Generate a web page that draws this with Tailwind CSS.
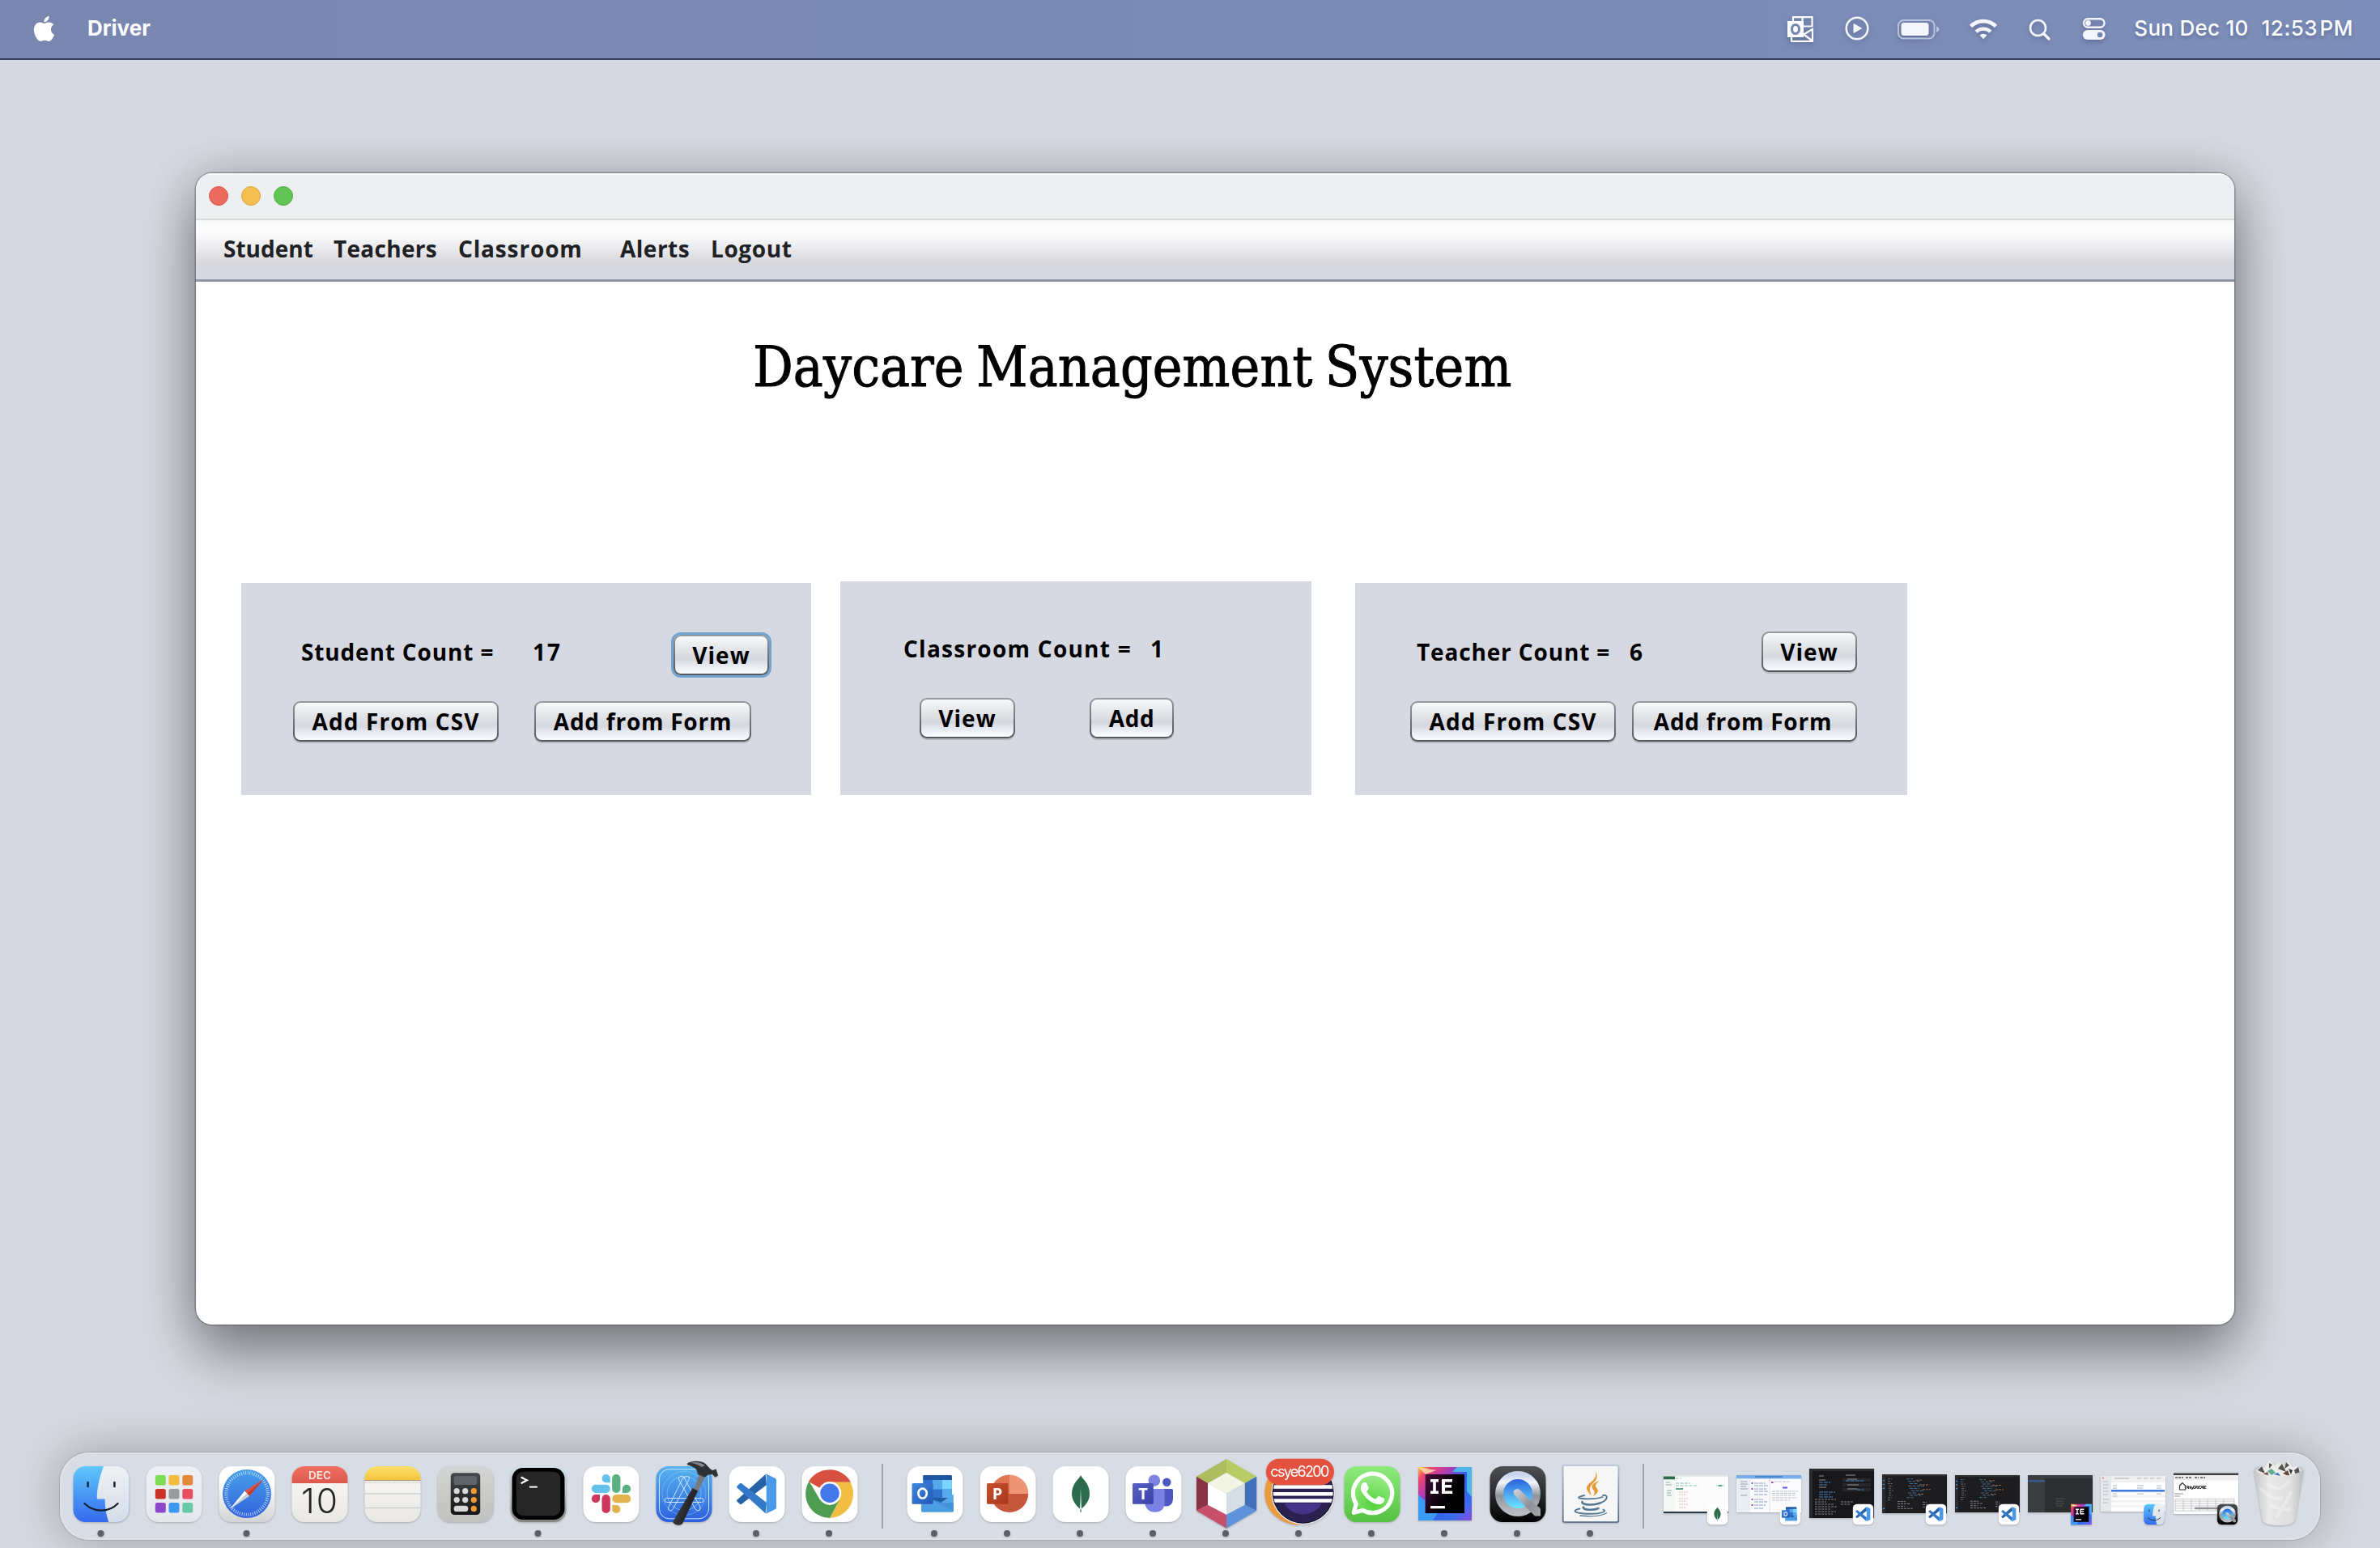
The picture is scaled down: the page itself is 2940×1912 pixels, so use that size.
<!DOCTYPE html>
<html lang="en">
<head>
<meta charset="utf-8">
<title>Driver</title>
<script src="https://cdn.jsdelivr.net/npm/@tailwindcss/browser@4"></script>
</head>
<body class="w-[2940px] h-[1912px] overflow-hidden bg-[#d6d9e1] flex flex-col font-['Inter',sans-serif]">

<!-- Shared dock artwork -->
<svg class="absolute w-0 h-0" aria-hidden="true">
  <defs>
    <linearGradient id="gFinder" x1="0" y1="0" x2="0" y2="1"><stop offset="0" stop-color="#5ec8fa"/><stop offset="1" stop-color="#3468ee"/></linearGradient>
    <linearGradient id="gFace" x1="0" y1="0" x2="0" y2="1"><stop offset="0" stop-color="#f0f1f4"/><stop offset="1" stop-color="#d3dce8"/></linearGradient>
    <linearGradient id="gPad" x1="0" y1="0" x2="0" y2="1"><stop offset="0" stop-color="#edf1f5"/><stop offset="1" stop-color="#e6e7ec"/></linearGradient>
    <linearGradient id="gWhite" x1="0" y1="0" x2="0" y2="1"><stop offset=".3" stop-color="#ffffff"/><stop offset="1" stop-color="#d4d4d5"/></linearGradient>
    <linearGradient id="gSafari" x1="0" y1="0" x2="0" y2="1"><stop offset="0" stop-color="#469fea"/><stop offset="1" stop-color="#3363dc"/></linearGradient>
    <linearGradient id="gXcode" x1="0" y1="0" x2="0" y2="1"><stop offset="0" stop-color="#56b4ee"/><stop offset="1" stop-color="#2c5fdf"/></linearGradient>
    <linearGradient id="gWhats" x1="0" y1="0" x2="0" y2="1"><stop offset="0" stop-color="#8deb7c"/><stop offset="1" stop-color="#55c141"/></linearGradient>
    <radialGradient id="gWhatsIn" cx=".5" cy=".8" r=".8"><stop offset="0" stop-color="#55d23c"/><stop offset="1" stop-color="#9bee8b"/></radialGradient>
    <linearGradient id="gNotes" x1="0" y1="0" x2="0" y2="1"><stop offset="0" stop-color="#fbdf6b"/><stop offset="1" stop-color="#f3c53b"/></linearGradient>
    <linearGradient id="gPaper" x1="0" y1="0" x2="0" y2="1"><stop offset="0" stop-color="#fcfbfa"/><stop offset="1" stop-color="#e8e7e2"/></linearGradient>
    <linearGradient id="gCal" x1="0" y1="0" x2="0" y2="1"><stop offset="0" stop-color="#ee6f62"/><stop offset="1" stop-color="#dc5a4d"/></linearGradient>
    <linearGradient id="gCalc" x1="0" y1="0" x2="0" y2="1"><stop offset="0" stop-color="#d3d5d3"/><stop offset="1" stop-color="#c1c1bf"/></linearGradient>
    <linearGradient id="gCalcIn" x1="0" y1="0" x2="0" y2="1"><stop offset="0" stop-color="#45494d"/><stop offset="1" stop-color="#161617"/></linearGradient>
    <linearGradient id="gTerm" x1="0" y1="0" x2="0" y2="1"><stop offset="0" stop-color="#cfe6ee"/><stop offset=".5" stop-color="#b9bec4"/><stop offset="1" stop-color="#86827e"/></linearGradient>
    <linearGradient id="gDark" x1="0" y1="0" x2="0" y2="1"><stop offset="0" stop-color="#505154"/><stop offset="1" stop-color="#020202"/></linearGradient>
    <linearGradient id="gIdea" x1="0" y1="0" x2="1" y2="1"><stop offset="0" stop-color="#fbd23c"/><stop offset=".12" stop-color="#f0456b"/><stop offset=".3" stop-color="#b63bb0"/><stop offset=".5" stop-color="#2e5ff0"/><stop offset=".8" stop-color="#3a6bf0"/><stop offset="1" stop-color="#8a4ee0"/></linearGradient>
    <linearGradient id="gIdeaIn" x1="0" y1="0" x2="1" y2=".6"><stop offset="0" stop-color="#470d3c"/><stop offset=".7" stop-color="#000"/></linearGradient>
    <linearGradient id="gQRing" x1="0" y1="0" x2="0" y2="1"><stop offset="0" stop-color="#c9d6ee"/><stop offset=".2" stop-color="#f1f5fc"/><stop offset=".55" stop-color="#8f959d"/><stop offset="1" stop-color="#b9bdc2"/></linearGradient>
    <linearGradient id="gQIn" x1="0" y1="0" x2="0" y2="1"><stop offset=".1" stop-color="#2a61dc"/><stop offset=".9" stop-color="#6fe9ff"/></linearGradient>
    <linearGradient id="gQTail" x1="0" y1="0" x2="1" y2="1"><stop offset="0" stop-color="#d5d8dc"/><stop offset=".6" stop-color="#8c9096"/><stop offset="1" stop-color="#a5a8ad"/></linearGradient>
    <linearGradient id="gOut" x1="0" y1="0" x2="1" y2="1"><stop offset="0" stop-color="#3f87dc"/><stop offset="1" stop-color="#2257b8"/></linearGradient>
    <linearGradient id="gPpt" x1="0" y1="0" x2="1" y2="1"><stop offset="0" stop-color="#c8502d"/><stop offset="1" stop-color="#a8381b"/></linearGradient>
    <linearGradient id="gTeams" x1="0" y1="0" x2="1" y2="1"><stop offset="0" stop-color="#5a62c6"/><stop offset="1" stop-color="#3a40a5"/></linearGradient>
    <linearGradient id="gJava" x1="0" y1="0" x2="0" y2="1"><stop offset="0" stop-color="#b4c2d9"/><stop offset="1" stop-color="#4c6380"/></linearGradient>
    <linearGradient id="gBin" x1="0" y1="0" x2="1" y2="0"><stop offset="0" stop-color="#c6c6c7"/><stop offset=".3" stop-color="#e8e8e8"/><stop offset=".75" stop-color="#dfdfdf"/><stop offset="1" stop-color="#bcbcbd"/></linearGradient>
    <linearGradient id="gHandle" x1="0" y1="0" x2="1" y2=".5"><stop offset="0" stop-color="#4c4c52"/><stop offset="1" stop-color="#17171a"/></linearGradient>
    <clipPath id="cTile"><rect x="10.500" y="17" width="69" height="69" rx="15.500"/></clipPath>
    <clipPath id="cEcl"><circle cx="49.700" cy="49.700" r="37"/></clipPath>

    <symbol id="finder" viewBox="10 17 70 70"><g clip-path="url(#cTile)"><rect x="10" y="17" width="70" height="70" fill="url(#gFinder)"/><path d="M48 17C43 30 40 43 39.600 56Q39.600 57.400 41 57.400H49.600C49.600 67 51 77 54.500 87H80V17Z" fill="url(#gFace)"/></g><path d="M28.600 37v5M61.400 37v5" stroke="#1c2a3c" stroke-width="2.600" stroke-linecap="round"/><path d="M24.400 63C36 74.500 54.500 74.500 65.600 63" fill="none" stroke="#15202e" stroke-width="2.200" stroke-linecap="round"/></symbol>

    <symbol id="vscode" viewBox="10 17 70 70"><rect x="10.500" y="17" width="69" height="69" rx="15.500" fill="#fff"/><path d="M55.600 26.900 20.500 58.500Q19.600 59.600 20.500 60.600L24 63.800Q25 64.500 26 63.800L57 40Z" fill="#2762a8"/><path d="M55.600 75.200 20.500 43.500Q19.600 42.400 20.500 41.400L24 38.200Q25 37.500 26 38.200L57 62Z" fill="#3379c9"/><path d="M55.600 26.700Q56.500 26.400 57.500 26.900L67.500 31.800Q69 32.600 69 34V68Q69 69.400 67.500 70.200L57.500 75Q56.500 75.500 55.600 75.200 56.700 74.500 56.700 73V29Q56.700 27.500 55.600 26.700Z" fill="#4b9ae9"/></symbol>

    <symbol id="outlook" viewBox="10 17 70 70"><rect x="10.500" y="17" width="69" height="69" rx="15.500" fill="#fff"/><rect x="30.300" y="28" width="35.500" height="34" rx="1.500" fill="#2f72cc"/><path d="M31.800 28H64.300Q65.800 28 65.800 29.500V34H30.300V29.500Q30.300 28 31.800 28Z" fill="#21559f"/><rect x="42" y="34" width="12" height="11.500" fill="#55aaea"/><rect x="54" y="34" width="11.800" height="11.500" fill="#7ad4fb"/><rect x="54" y="45.500" width="11.800" height="11" fill="#55aaea"/><path d="M36 56H62L50 64Z" fill="#235ca8"/><path d="M43 58.500 67.800 73V51.500L52 62Z" fill="#54a9e6"/><path d="M28 56 40 57 67.800 72.500Q67.500 73.700 66 73.700H30Q28 73.700 28 72Z" fill="#4e9fe2"/><path d="M46 62 67.800 72.500V62L52 62Z" fill="#4790dc"/><rect x="16.500" y="38" width="26.200" height="25.700" rx="1.500" fill="url(#gOut)"/><ellipse cx="29.600" cy="50.600" rx="5.200" ry="5.900" fill="none" stroke="#fff" stroke-width="2.700"/></symbol>

    <symbol id="mongo" viewBox="10 17 70 70"><rect x="10.500" y="17" width="69" height="69" rx="15.500" fill="#fff"/><path d="M45 28C47 33 56 38 56 51 56 60 50 66 46 69.500L45.400 74H44.600L44 69.500C40 66 34 60 34 51 34 38 43 33 45 28Z" fill="#2b6a4b"/><path d="M45 44 46 69.500 45 72 44 69.500Z" fill="#dfe9e3"/></symbol>

    <symbol id="idea" viewBox="10 16 70 70"><rect x="12" y="18" width="66" height="66" fill="url(#gIdea)"/><path d="M60 18H78V55L72 48V24H54Z" fill="#4fb6ea"/><path d="M12 52 20.700 60V75H36L30 84H12Z" fill="#3a9af4"/><path d="M12 18 20.700 27 34 22Z" fill="#fde8b0" opacity=".8"/><rect x="20.700" y="27" width="48.300" height="48" fill="url(#gIdeaIn)"/><path d="M27 33h10v3.500h-3.200v11H37V51H27v-3.500h3.200v-11H27ZM41 33h13v3.600h-9V40h8v3.500h-8v3.900h9.200V51H41ZM27 66h18v3.200H27Z" fill="#fff"/></symbol>

    <symbol id="quicktime" viewBox="10 17 70 70"><rect x="10.500" y="17" width="69" height="69" rx="15.500" fill="url(#gDark)"/><circle cx="45" cy="51" r="23" fill="url(#gQIn)" stroke="url(#gQRing)" stroke-width="10"/><path d="M40.500 52Q38 47.500 42 45.500 45.500 44 48.500 47L66 64.500 69.500 66.500Q73 68 73 71V78.500H66L59.500 72Z" fill="url(#gQTail)"/></symbol>

    <symbol id="code" viewBox="0 0 80 50" preserveAspectRatio="none"><rect width="80" height="50" fill="#1d1d1f"/><rect width="80" height="2.500" fill="#2f2f32"/><rect width="4" height="50" fill="#2a2b2e"/><g fill="none" stroke-width=".9"><path d="M7 6h5M7 9h4M7 12h6M8 15h5M8 18h4M8 21h6M8 24h4M8 27h5M7 30h5M7 33h4" stroke="#68707a" stroke-dasharray="3 .8"/><path d="M30 6h8M32 9h14M34 12h10M32 15h20M34 18h12M36 21h16M32 24h10M34 27h14M30 30h9" stroke="#4b7ba0" stroke-dasharray="4 1.500"/><path d="M42 7.500h8M46 13.500h12M50 19.500h10M44 25.500h8" stroke="#a4714f" stroke-dasharray="3 1"/><path d="M19 35h10M19 38h16M19 41h9M19 44h20M50 36h5M50 39h6M50 42h5" stroke="#8b8f94" stroke-dasharray="3 1"/><path d="M1 8h2M1 13h2M1 18h2M1 44h2" stroke="#3f8fe0" stroke-width="1.400"/></g></symbol>
  </defs>
</svg>

<!-- Menu bar -->
<header class="h-[74px] shrink-0 bg-linear-to-r from-[#7987b0] to-[#7d8eba] border-b-2 border-[#38405c] flex items-center text-white">
  <svg class="ml-[39px] mt-[-2px] w-[31px] h-[31px]" viewBox="0 0 24 24" fill="#fff"><path d="M12.152 6.896c-.948 0-2.415-1.078-3.960-1.040-2.040.027-3.910 1.183-4.961 3.014-2.117 3.675-.546 9.103 1.519 12.090 1.013 1.454 2.208 3.090 3.792 3.039 1.520-.065 2.090-.987 3.935-.987 1.831 0 2.350.987 3.960.948 1.637-.026 2.676-1.480 3.676-2.948 1.156-1.688 1.636-3.325 1.662-3.415-.039-.013-3.182-1.221-3.220-4.857-.026-3.040 2.480-4.494 2.597-4.559-1.429-2.090-3.623-2.324-4.390-2.376-2-.156-3.675 1.090-4.610 1.090zM15.530 3.830c.843-1.012 1.400-2.427 1.245-3.830-1.207.052-2.662.805-3.532 1.818-.780.896-1.454 2.338-1.273 3.714 1.338.104 2.715-.688 3.559-1.701"/></svg>
  <span class="ml-[38px] mt-[-4px] text-[26px] font-bold whitespace-nowrap">Driver</span>
  <svg class="ml-auto w-[400px] h-[72px] [filter:drop-shadow(0_3px_3px_rgba(30,40,80,.3))]" viewBox="2206 0 400 72" fill="none" stroke="#f4f6fb">
    <g stroke="#fff" stroke-width="2.200"><path d="M2215 26V21.200H2238.500V33M2226.500 21V32.500M2228 32.500H2238.500M2213 46V51H2239V36L2228 42.500 2239 50.500"/><path d="M2208 26H2228V46H2208Z" fill="#fff" stroke="none"/><ellipse cx="2218" cy="36" rx="4.500" ry="5.500" stroke="#7486b2" stroke-width="3.200"/></g>
    <circle cx="2294" cy="35" r="13.300" stroke-width="2.600"/><path d="M2290 29.500V40.500L2299.500 35Z" fill="#f4f6fb" stroke-width="1" stroke-linejoin="round"/>
    <rect x="2345" y="25" width="44.500" height="22.500" rx="6.500" stroke-width="2" stroke="#b9c3dc"/><rect x="2348.500" y="28" width="34" height="16" rx="3.500" fill="#f4f6fb" stroke="none"/><path d="M2392 32.500Q2395.500 34 2395.500 36.200 2395.500 38.500 2392 40Z" fill="#b9c3dc" stroke="none"/>
    <path d="M2434.500 32.500A22 22 0 0 1 2465.500 32.500" stroke-width="4.600"/><path d="M2441 39.200A13 13 0 0 1 2459 39.200" stroke-width="4.400"/><path d="M2445.500 43.500A7 7 0 0 1 2454.500 43.500L2450 48.300Z" fill="#f4f6fb" stroke="none"/>
    <circle cx="2517.500" cy="34.500" r="9.500" stroke-width="2.600"/><path d="M2524.500 41.500 2531 48" stroke-width="3.200" stroke-linecap="round"/>
    <rect x="2574" y="23.200" width="25.500" height="10.600" rx="5.300" stroke-width="2.400"/><circle cx="2579.500" cy="28.500" r="3.400" fill="#f4f6fb" stroke="none"/><rect x="2572.800" y="37" width="27.800" height="12" rx="6" fill="#f4f6fb" stroke="none"/><circle cx="2594" cy="43" r="3.300" fill="#7486b2" stroke="none"/>
  </svg>
  <span class="ml-[30px] mt-[-4px] text-[26px] font-medium whitespace-nowrap tracking-[.27px] [text-shadow:0_3px_4px_rgba(30,40,80,.3)]">Sun Dec 10</span>
  <span class="ml-[16px] mr-[33px] mt-[-4px] text-[26px] font-medium whitespace-nowrap tracking-[.5px] [word-spacing:-5px] [text-shadow:0_3px_4px_rgba(30,40,80,.3)]">12:53 PM</span>
</header>

<!-- Application window -->
<main class="ml-[242px] mt-[140px] w-[2518px] h-[1422px] shrink-0 rounded-[20px] overflow-hidden bg-white flex flex-col shadow-[0_0_0_1.5px_rgba(80,82,90,.45),0_36px_70px_rgba(0,0,0,.4),0_0_60px_rgba(0,0,0,.18)] font-['Open_Sans',sans-serif] font-bold text-[28px] text-black">
  <div class="h-[58px] shrink-0 bg-[#eeeff1] border-t-2 border-t-[#fafafa] border-b-2 border-b-[#d8d9d9] flex items-center gap-4 pl-4 pb-[2px]">
    <span class="size-6 rounded-full bg-[#ec6a5e] border border-[#d65548]"></span>
    <span class="size-6 rounded-full bg-[#f4bf50] border border-[#dca63c]"></span>
    <span class="size-6 rounded-full bg-[#61c555] border border-[#50ab43]"></span>
  </div>
  <nav class="h-[76px] shrink-0 flex items-start leading-[71px] whitespace-nowrap text-[#202124] border-b-[3px] border-[#9095a5] bg-[linear-gradient(180deg,#f8faf9_0,#fdfdfd_18%,#f8f8fa_28%,#d9d9dd_72%,#d6d9e1_76%)]">
    <span class="ml-[34px] w-[136px]">Student</span>
    <span class="w-[154px] tracking-[.3px]">Teachers</span>
    <span class="w-[200px] tracking-[.85px]">Classroom</span>
    <span class="w-[112px] tracking-[.5px]">Alerts</span>
    <span class="tracking-[.6px]">Logout</span>
  </nav>
  <h1 class="ml-[688px] mt-[50px] h-[110px] shrink-0 leading-[110px] font-['DejaVu_Serif_Condensed','DejaVu_Serif',serif] [font-stretch:condensed] font-normal text-[69px] tracking-[.1px] [word-spacing:-4.5px] [-webkit-text-stroke:1px_#000] whitespace-nowrap">Daycare Management System</h1>

  <div class="flex items-end ml-14 mt-[210px] whitespace-nowrap leading-[50px]">
    <!-- Students -->
    <section class="w-[704px] h-[262px] bg-[#d6d9e1] pt-[60px]">
      <div class="flex h-[50px]">
        <span class="ml-[74px] w-[286px] tracking-[.85px]">Student Count =</span>
        <span class="w-[174px] tracking-[2px]">17</span>
        <button class="mt-1 w-[118px] h-[50px] p-[2px] rounded-[9px] bg-linear-to-b from-[#959a9f] to-[#53565b] shadow-[0_0_0_3px_#73a4d1]"><span class="flex justify-center h-full rounded-[7px] leading-[46px] tracking-[1.100px] bg-[linear-gradient(180deg,#f8f9fa_0,#e2e4e7_35%,#d5d8df_62%,#e4e7f0_76%,#fbfcff_100%)]">View</span></button>
      </div>
      <div class="flex gap-11 mt-9 ml-16">
        <button class="w-[254px] h-[50px] p-[2px] rounded-[9px] bg-linear-to-b from-[#959a9f] to-[#53565b] shadow-[0_2px_0_#b6b9c0]"><span class="flex justify-center h-full rounded-[7px] leading-[46px] tracking-[1.120px] bg-[linear-gradient(180deg,#f8f9fa_0,#e2e4e7_35%,#d5d8df_62%,#e4e7f0_76%,#fbfcff_100%)]">Add From CSV</span></button>
        <button class="w-[268px] h-[50px] p-[2px] rounded-[9px] bg-linear-to-b from-[#959a9f] to-[#53565b] shadow-[0_2px_0_#b6b9c0]"><span class="flex justify-center h-full rounded-[7px] leading-[46px] tracking-[.75px] bg-[linear-gradient(180deg,#f8f9fa_0,#e2e4e7_35%,#d5d8df_62%,#e4e7f0_76%,#fbfcff_100%)]">Add from Form</span></button>
      </div>
    </section>
    <!-- Classrooms -->
    <section class="ml-9 w-[582px] h-[264px] bg-[#d6d9e1] pt-[58px]">
      <div class="flex h-[50px]">
        <span class="ml-[78px] w-[305px] tracking-[1.250px]">Classroom Count =</span>
        <span>1</span>
      </div>
      <div class="flex gap-[92px] mt-9 ml-[98px]">
        <button class="w-[118px] h-[50px] p-[2px] rounded-[9px] bg-linear-to-b from-[#959a9f] to-[#53565b] shadow-[0_2px_0_#b6b9c0]"><span class="flex justify-center h-full rounded-[7px] leading-[46px] tracking-[1.100px] bg-[linear-gradient(180deg,#f8f9fa_0,#e2e4e7_35%,#d5d8df_62%,#e4e7f0_76%,#fbfcff_100%)]">View</span></button>
        <button class="w-[104px] h-[50px] p-[2px] rounded-[9px] bg-linear-to-b from-[#959a9f] to-[#53565b] shadow-[0_2px_0_#b6b9c0]"><span class="flex justify-center h-full rounded-[7px] leading-[46px] tracking-[.6px] bg-[linear-gradient(180deg,#f8f9fa_0,#e2e4e7_35%,#d5d8df_62%,#e4e7f0_76%,#fbfcff_100%)]">Add</span></button>
      </div>
    </section>
    <!-- Teachers -->
    <section class="ml-[54px] w-[682px] h-[262px] bg-[#d6d9e1] pt-[60px]">
      <div class="flex h-[50px]">
        <span class="ml-[76px] w-[263px] tracking-[.85px]">Teacher Count =</span>
        <span class="w-[163px]">6</span>
        <button class="w-[118px] h-[50px] p-[2px] rounded-[9px] bg-linear-to-b from-[#959a9f] to-[#53565b] shadow-[0_2px_0_#b6b9c0]"><span class="flex justify-center h-full rounded-[7px] leading-[46px] tracking-[1.100px] bg-[linear-gradient(180deg,#f8f9fa_0,#e2e4e7_35%,#d5d8df_62%,#e4e7f0_76%,#fbfcff_100%)]">View</span></button>
      </div>
      <div class="flex gap-5 mt-9 ml-[68px]">
        <button class="w-[254px] h-[50px] p-[2px] rounded-[9px] bg-linear-to-b from-[#959a9f] to-[#53565b] shadow-[0_2px_0_#b6b9c0]"><span class="flex justify-center h-full rounded-[7px] leading-[46px] tracking-[1.120px] bg-[linear-gradient(180deg,#f8f9fa_0,#e2e4e7_35%,#d5d8df_62%,#e4e7f0_76%,#fbfcff_100%)]">Add From CSV</span></button>
        <button class="w-[278px] h-[50px] p-[2px] rounded-[9px] bg-linear-to-b from-[#959a9f] to-[#53565b] shadow-[0_2px_0_#b6b9c0]"><span class="flex justify-center h-full rounded-[7px] leading-[46px] tracking-[.75px] pr-1 bg-[linear-gradient(180deg,#f8f9fa_0,#e2e4e7_35%,#d5d8df_62%,#e4e7f0_76%,#fbfcff_100%)]">Add from Form</span></button>
      </div>
    </section>
  </div>
</main>

<!-- Dock -->
<footer class="ml-[74px] mt-[158px] w-[2792px] h-[108px] shrink-0 rounded-[36px] bg-[#d8dce5] shadow-[inset_0_0_0_2px_#e0e2e8,0_0_0_1px_#a6a8ad,0_0_60px_rgba(0,0,0,.28)] flex pl-[6px] [&>svg]:w-[90px] [&>svg]:h-[108px] [&>svg]:shrink-0 [&>svg]:overflow-visible [&>svg]:[filter:drop-shadow(0_1px_1px_rgba(0,0,0,.22))]">
  <svg viewBox="0 0 90 108"><use href="#finder" x="10" y="17" width="70" height="70"/><circle cx="44.500" cy="100" r="4" fill="#5b5f69"/></svg>
  <svg viewBox="0 0 90 108"><rect x="10.500" y="17" width="69" height="69" rx="15.500" fill="url(#gPad)"/><rect x="21.800" y="28" width="13" height="12.500" rx="2.500" fill="#7fdc55"/><rect x="38.500" y="28" width="13" height="12.500" rx="2.500" fill="#f2bd41"/><rect x="55.300" y="28" width="13" height="12.500" rx="2.500" fill="#e28a3a"/><rect x="21.800" y="45" width="13" height="12.500" rx="2.500" fill="#cb3326"/><rect x="38.500" y="45" width="13" height="12.500" rx="2.500" fill="#989b9d"/><rect x="55.300" y="45" width="13" height="12.500" rx="2.500" fill="#e8505f"/><rect x="21.800" y="62" width="13" height="12.500" rx="2.500" fill="#8e48cc"/><rect x="38.500" y="62" width="13" height="12.500" rx="2.500" fill="#3c98f0"/><rect x="55.300" y="62" width="13" height="12.500" rx="2.500" fill="#66c9a8"/></svg>
  <svg viewBox="0 0 90 108"><rect x="10.500" y="17" width="69" height="69" rx="15.500" fill="url(#gWhite)"/><circle cx="45" cy="51" r="30" fill="url(#gSafari)"/><circle cx="45" cy="51" r="25.800" fill="none" stroke="#d6e7fb" stroke-width="4" stroke-dasharray=".9 1.802" opacity=".85"/><path d="M24.300 69.500 42.300 47.500 48.200 53.500Z" fill="#fff"/><path d="M24.300 69.500 45.200 50.500 48.200 53.500Z" fill="#c9ced6"/><path d="M66 33 42.300 47.500 48.200 53.500Z" fill="#e25244"/><path d="M66 33 45.200 50.500 48.200 53.500Z" fill="#bd3e33"/><circle cx="44.500" cy="100" r="4" fill="#5b5f69"/></svg>
  <svg viewBox="0 0 90 108"><g clip-path="url(#cTile)"><rect x="10" y="17" width="70" height="70" fill="url(#gPaper)"/><rect x="10" y="17" width="70" height="21" fill="url(#gCal)"/></g><text x="45" y="32.600" font-family="Inter" font-size="13.500" font-weight="600" fill="#fbe9e6" text-anchor="middle" textLength="28">DEC</text><text x="44.500" y="75" font-family="Inter" font-size="42.500" font-weight="300" fill="#262626" text-anchor="middle" textLength="45">10</text></svg>
  <svg viewBox="0 0 90 108"><g clip-path="url(#cTile)"><rect x="10" y="17" width="70" height="70" fill="url(#gPaper)"/><rect x="10" y="17" width="70" height="17" fill="url(#gNotes)"/><rect x="10" y="34" width="70" height="1.200" fill="#a9a08a"/><path d="M11 37.500H80" stroke="#bdbdb8" stroke-width="1.200" stroke-dasharray="1.200 1.200"/><path d="M10 51H80M10 68.500H80" stroke="#cfcfd3" stroke-width="1.300"/></g></svg>
  <svg viewBox="0 0 90 108"><rect x="10.500" y="17" width="69" height="69" rx="15.500" fill="url(#gCalc)"/><rect x="26.700" y="25.300" width="36.500" height="51.700" rx="4.500" fill="url(#gCalcIn)"/><rect x="30.700" y="29" width="28.500" height="11" rx="2.500" fill="#5f6468"/><g fill="#d8d8d6"><circle cx="34.200" cy="47.700" r="3.600"/><circle cx="44.700" cy="47.700" r="3.600"/><circle cx="34.200" cy="58.600" r="3.600"/><circle cx="44.700" cy="58.600" r="3.600"/><rect x="30.600" y="65.800" width="17.700" height="7.200" rx="3.600"/></g><g fill="#f09a38"><circle cx="55.300" cy="47.700" r="3.600"/><circle cx="55.300" cy="58.600" r="3.600"/><circle cx="55.300" cy="69.400" r="3.600"/></g></svg>
  <svg viewBox="0 0 90 108"><rect x="10.500" y="17" width="69" height="69" rx="15.500" fill="url(#gTerm)"/><rect x="12.500" y="19" width="65" height="64" rx="13.500" fill="#000"/><rect x="17.700" y="23.800" width="54.500" height="54.500" rx="8.500" fill="#262626"/><path d="M23.600 30.500 30.800 34.200 23.600 38.200" fill="none" stroke="#fff" stroke-width="2.300"/><path d="M34 42.600H43.800" stroke="#fff" stroke-width="2"/><circle cx="44.500" cy="100" r="4" fill="#5b5f69"/></svg>
  <svg viewBox="0 0 90 108"><rect x="10.500" y="17" width="69" height="69" rx="15.500" fill="#fdfdfd"/><g fill="#65c2ea"><rect x="20.800" y="39.700" width="23" height="10.200" rx="5.100"/><path d="M43.800 37.200H38.700A5.100 5.100 0 1 1 43.800 32.100Z"/></g><g fill="#5bb181"><rect x="46.100" y="27" width="10.300" height="23" rx="5.100"/><path d="M58.900 49.900V44.800A5.100 5.100 0 1 1 64 49.900Z"/></g><g fill="#e2b34c"><rect x="46.200" y="52.100" width="23" height="10.200" rx="5.100"/><path d="M46.200 64.900H51.300A5.100 5.100 0 1 1 46.200 70Z"/></g><g fill="#cd375d"><rect x="33.500" y="52.100" width="10.300" height="23" rx="5.100"/><path d="M31 52.100V57.200A5.100 5.100 0 1 1 25.900 52.100Z"/></g></svg>
  <svg viewBox="0 0 90 108"><rect x="10.500" y="17" width="69" height="69" rx="15.500" fill="url(#gXcode)"/><rect x="14.500" y="20.800" width="61" height="61" rx="12" fill="none" stroke="#cfe6fb" stroke-width="1"/><g fill="none" stroke="#a8d2f6" stroke-width=".8"><circle cx="45" cy="50.500" r="27" opacity=".5"/><circle cx="45" cy="50.500" r="21" opacity=".7"/><g stroke="#cfe6fb" stroke-width="1"><rect x="21" y="56.500" width="48" height="5" rx="2.500"/><path d="M43.500 31.500 26 67Q24.500 71 27.500 72Q30 72.500 31.500 69.500L51.500 32.500Q52 29 48.500 29.500 47 29.500 43.500 31.500ZM40 29.500Q37 31 39 34.500L59 70Q61.500 73 64 71.500 66 70 64.500 66.500L45 31Q43 28.500 40 29.500Z"/></g></g><path d="M57 46 64.500 25 72 28 61.500 50Z" fill="#77797f"/><path d="M55.500 44 62 47.500 43 88Q36.500 92.500 31 86Z" fill="url(#gHandle)"/><path d="M49 13.500C55 9.500 66 10 71.500 14L77 20 80 22 84.500 20.500 87 28.500 83.500 30.500 80 27 75 27.500 70.500 30.500 62 27Q61.500 18 49 15Z" fill="#303135"/><path d="M52 12.800Q63 10.500 71 16L67 18Q60 13.500 52 12.800Z" fill="#85868b"/></svg>
  <svg viewBox="0 0 90 108"><use href="#vscode" x="10" y="17" width="70" height="70"/><circle cx="44" cy="100" r="4" fill="#5b5f69"/></svg>
  <svg viewBox="0 0 90 108"><rect x="10.500" y="17" width="69" height="69" rx="15.500" fill="#fdfdfd"/><path d="M45 51 19 36A30 30 0 0 1 71 36.500L70.200 36.800H45Z" fill="#d8503f"/><path d="M45 36.800H70.500A30 30 0 0 1 45 81L57.300 58Z" fill="#f1bd42"/><path d="M19.500 35.500 32.700 58 45 65.200 57.300 58.100 45 81A30 30 0 0 1 19.500 35.500Z" fill="#4f9d52"/><circle cx="45" cy="50.300" r="14.300" fill="#fff"/><circle cx="45" cy="50.300" r="11.700" fill="#4379e8"/><circle cx="44" cy="100" r="4" fill="#5b5f69"/></svg>
  <div class="w-10 flex justify-center pt-[14px]"><span class="w-[2px] h-20 bg-[#a0a4ac]"></span></div>
  <svg viewBox="0 0 90 108"><use href="#outlook" x="10" y="17" width="70" height="70"/><circle cx="44" cy="100" r="4" fill="#5b5f69"/></svg>
  <svg viewBox="0 0 90 108"><rect x="10.500" y="17" width="69" height="69" rx="15.500" fill="#fff"/><path d="M47 50.700V27.400A23.300 23.300 0 0 0 23.700 50.700Z" fill="#e07552"/><path d="M47 50.700V27.400A23.300 23.300 0 0 1 70.300 50.700Z" fill="#ef9574"/><path d="M23.700 50.700H70.300A23.300 23.300 0 0 1 23.700 50.700Z" fill="#c7573a"/><rect x="19" y="38" width="26.500" height="25.700" rx="1.500" fill="url(#gPpt)"/><text x="32" y="57.500" font-family="Open Sans" font-size="20" font-weight="700" fill="#fff" text-anchor="middle">P</text><circle cx="44" cy="100" r="4" fill="#5b5f69"/></svg>
  <svg viewBox="0 0 90 108"><use href="#mongo" x="10" y="17" width="70" height="70"/><circle cx="44" cy="100" r="4" fill="#5b5f69"/></svg>
  <svg viewBox="0 0 90 108"><rect x="10.500" y="17" width="69" height="69" rx="15.500" fill="#fff"/><circle cx="61.300" cy="36.700" r="5.200" fill="#4f57c2"/><path d="M54 45H67.500Q69 45 69 46.500V57Q69 66.500 60 66.500 56 66.500 54 64Z" fill="#4f57c2"/><circle cx="45.800" cy="34.700" r="7.300" fill="#7e84e3"/><path d="M36 45H57.200Q58.700 45 58.700 46.500V61Q58.700 73.700 46.500 73.700 36 73.700 34 62Z" fill="#7b81e2"/><rect x="19" y="38" width="25.800" height="25.700" rx="1.500" fill="url(#gTeams)"/><text x="32" y="57.500" font-family="Open Sans" font-size="20" font-weight="700" fill="#fff" text-anchor="middle">T</text><circle cx="44" cy="100" r="4" fill="#5b5f69"/></svg>
  <svg viewBox="0 0 90 108"><path d="M45 8 8 29.700 22 38 45 25Z" fill="#adbc5c"/><path d="M45 8 82.200 29.700 67.700 38 45 25Z" fill="#b9cc64"/><path d="M8 29.700 22 38V64.700L8 72Z" fill="#8b3346"/><path d="M8 72 22 64.700 45 76.700V93.700Z" fill="#c9506a"/><path d="M82.200 29.700 67.700 38V64.700L82.200 72Z" fill="#4270ba"/><path d="M82.200 72 67.700 64.700 45 76.700V93.700Z" fill="#5e92db"/><path d="M45 25 67.700 38 45 50.700 22 38Z" fill="#f2f4e4"/><path d="M22 38 45 50.700V76.700L22 64.700Z" fill="#fff"/><path d="M67.700 38 45 50.700V76.700L67.700 64.700Z" fill="#d4dce5"/><circle cx="44" cy="100" r="4" fill="#5b5f69"/></svg>
  <svg viewBox="0 0 90 108"><path d="M44 89.500C18 88 2.200 70 2.200 50 2.200 30 16 14 38 12Z" fill="#eb9a3e"/><circle cx="49.700" cy="49.700" r="39.300" fill="#e9eaf0"/><circle cx="49.700" cy="49.700" r="38" fill="#0f0c1c"/><g clip-path="url(#cEcl)"><rect x="10" y="10" width="80" height="80" fill="#2b2150"/><circle cx="49.700" cy="50" r="26.500" fill="#45348a"/><rect x="10" y="38" width="80" height="25" fill="#2b2150"/><path d="M10 42.500H90M10 51.200H90M10 59.500H90" stroke="#fff" stroke-width="4.400"/></g><rect x="3.900" y="7.700" width="84" height="32.500" rx="16.200" fill="#e5513f"/><text x="45.800" y="29.800" font-family="Inter" font-size="18" fill="#fff" text-anchor="middle" textLength="73">csye6200</text><circle cx="44" cy="100" r="4" fill="#5b5f69"/></svg>
  <svg viewBox="0 0 90 108"><rect x="10.500" y="17" width="69" height="69" rx="15.500" fill="url(#gWhats)"/><circle cx="45.500" cy="50.300" r="24" fill="url(#gWhatsIn)"/><path d="M45.500 26.200A24.200 24.200 0 1 1 33.500 71.400L22.300 74.300 25.300 63.500A24.200 24.200 0 0 1 45.500 26.200Z" fill="none" stroke="#fff" stroke-width="5.200" stroke-linejoin="round"/><path transform="translate(16.300 21.300) scale(2.430)" fill="#fff" d="M17.472 14.382c-.297-.149-1.758-.867-2.030-.967-.273-.099-.471-.148-.670.150-.197.297-.767.966-.940 1.164-.173.199-.347.223-.644.075-.297-.150-1.255-.463-2.390-1.475-.883-.788-1.480-1.761-1.653-2.059-.173-.297-.018-.458.130-.606.134-.133.298-.347.446-.520.149-.174.198-.298.298-.497.099-.198.050-.371-.025-.520-.075-.149-.669-1.612-.916-2.207-.242-.579-.487-.500-.669-.510-.173-.008-.371-.010-.570-.010-.198 0-.520.074-.792.372-.272.297-1.040 1.016-1.040 2.479 0 1.462 1.065 2.875 1.213 3.074.149.198 2.096 3.200 5.077 4.487.709.306 1.262.489 1.694.625.712.227 1.360.195 1.871.118.571-.085 1.758-.719 2.006-1.413.248-.694.248-1.289.173-1.413-.074-.124-.272-.198-.570-.347"/><circle cx="44" cy="100" r="4" fill="#5b5f69"/></svg>
  <svg viewBox="0 0 90 108"><use href="#idea" x="10" y="16" width="70" height="70"/><circle cx="44" cy="100" r="4" fill="#5b5f69"/></svg>
  <svg viewBox="0 0 90 108"><use href="#quicktime" x="10" y="17" width="70" height="70"/><circle cx="44" cy="100" r="4" fill="#5b5f69"/></svg>
  <svg viewBox="0 0 90 108"><rect x="10.800" y="16" width="68.400" height="70" rx="1.500" fill="#f6f6f6" stroke="url(#gJava)" stroke-width="1.500"/><g fill="#e89a35"><path d="M50.500 23C53.500 30 49 33.500 43 38.500 38 43 39.500 47 46 53.500 43 44.500 43 43 48 38 53 33.500 54.500 29 50.500 23Z"/><path d="M56 35C47 37.500 44.500 42 48.500 46.500 50.500 49 50 51 47.500 54 55 50.500 55 46.500 52 43.500 50 40.500 51.500 38 56 35Z"/></g><g fill="none" stroke="#557793" stroke-width="1.900" stroke-linecap="round"><path d="M37 53C28 55 27 57 38 57.300 48 57.500 56 56.500 59.500 55"/><path d="M34.500 61C33.500 65.500 50 65.300 56.500 62.500" stroke-width="2.600"/><path d="M36 67.500C34.500 71.500 49 71.500 54.500 69" stroke-width="2.600"/><path d="M31.500 69.500C24 71 22.500 74 34 75.200 45 76.200 57 75.500 61.500 73 63 72 61.500 71 60.500 70.500"/><path d="M32 78C45 79.500 58 78.500 64.500 74.800" stroke-width="1.300"/><path d="M60 53C66.500 51.500 67 58.500 57.500 62"/></g><circle cx="44" cy="100" r="4" fill="#5b5f69"/></svg>
  <div class="w-10 flex justify-center pt-[14px]"><span class="w-[2px] h-20 bg-[#a0a4ac]"></span></div>
  <!-- Minimised windows -->
  <svg viewBox="0 0 90 108"><rect x="5" y="27.500" width="80" height="47.500" fill="#fcfcfc"/><rect x="5" y="27.500" width="80" height="2" fill="#dcdddd"/><rect x="5" y="29.500" width="14" height="4" fill="#2b6a4b"/><rect x="5" y="33.500" width="14" height="40" fill="#f3f7f6"/><rect x="5" y="73" width="80" height="2" fill="#26384a"/><g fill="none" stroke-width=".9"><path d="M8 37h5M8 40h7M9 47h6M9 50h5M9 53h6" stroke="#8aa39a"/><path d="M20 32h7M20 38h18M20 41h28M70 41h11" stroke="#7cbf9c" stroke-dasharray="4 1.500"/><path d="M20 45h9M73 41h4" stroke="#2b8a5b" stroke-width="1.500"/><path d="M24 49h12M24 52h9M24 57h12M24 60h9M24 64h12M24 68h9" stroke="#d9b7ae" stroke-dasharray="2 1"/></g><use href="#mongo" x="58.500" y="63.500" width="26" height="26"/></svg>
  <svg viewBox="0 0 90 108"><rect x="5" y="28" width="80" height="46" fill="#fbfbfd"/><rect x="5" y="28" width="80" height="4.500" fill="#7aaee8"/><rect x="28" y="29" width="34" height="2" fill="#4c86cf"/><rect x="5" y="32.500" width="17" height="41.500" fill="#e9edf4"/><path d="M46 33v41" stroke="#d4d7de" stroke-width=".8"/><g fill="none" stroke-width=".9"><path d="M10 36h8M10 39h9M10 42h7M10 45h9M10 53h8" stroke="#8f9aac"/><path d="M27 38h14M27 41h17M27 45h15M27 48h17M27 52h16M27 58h12M27 61h16M27 65h14M27 69h12" stroke="#7c93bd" stroke-dasharray="5 1"/><path d="M23.500 38h2M23.500 45h2M23.500 58h2M23.500 65h2M48 37h2.500" stroke="#9b4ba8" stroke-width="2"/><path d="M52 36h20M49 48h32M49 50.500h30M49 53h28M49 56h31M49 59h22" stroke="#b4b9c6" stroke-dasharray="4 1"/><path d="M62 43.500h6" stroke="#5a5be6" stroke-width="2"/></g><use href="#outlook" x="58.500" y="63.500" width="26" height="26"/></svg>
  <svg viewBox="0 0 90 108"><rect x="5" y="20" width="80" height="61" fill="#18181a"/><rect x="5" y="20" width="80" height="3" fill="#2d2d30"/><rect x="5" y="23" width="4" height="58" fill="#28292c"/><rect x="46" y="32" width="35" height="4" fill="#26282c"/><rect x="46" y="38" width="35" height="4" fill="#26282c"/><rect x="46" y="44" width="35" height="4" fill="#26282c"/><g fill="none" stroke-width=".9"><path d="M17 29h6M17 34h8M17 43h9M50 28h12M52 33h12M52 40h14M52 45h12" stroke="#9a9da2"/><path d="M17 37h14M17 40h10M17 49h20M17 52h14M17 55h18M50 35h22M64 46h8" stroke="#4a90d0" stroke-dasharray="5 1"/><path d="M12 58h26M12 61h14M12 64h24M12 67h28M12 70h20M12 73h26M12 76h22M44 61h16M44 64h12" stroke="#8a8d91" stroke-dasharray="3 1"/></g><use href="#vscode" x="58.500" y="63.500" width="26" height="26"/></svg>
  <svg viewBox="0 0 90 108"><use href="#code" x="5" y="27" width="80" height="48"/><use href="#vscode" x="58.500" y="63.500" width="26" height="26"/></svg>
  <svg viewBox="0 0 90 108"><use href="#code" x="5" y="28" width="80" height="46"/><use href="#vscode" x="58.500" y="63.500" width="26" height="26"/></svg>
  <svg viewBox="0 0 90 108"><rect x="5" y="28" width="80" height="46" fill="#2c2d2f"/><rect x="5" y="28" width="80" height="4" fill="#3b3d40"/><rect x="5" y="32" width="21" height="42" fill="#3b3e41"/><rect x="5" y="34" width="21" height="2.500" fill="#3a5a8c"/><path d="M39 57h12M40 60h9M39 63h11M40 66h8" stroke="#55585c" stroke-width=".9"/><use href="#idea" x="57.500" y="63" width="27" height="27"/></svg>
  <svg viewBox="0 0 90 108"><rect x="5" y="29" width="80" height="44" fill="#fdfdfd"/><rect x="5" y="29" width="13" height="44" fill="#e6e8ea"/><rect x="18" y="29" width="67" height="8" fill="#f0f0f1"/><rect x="18" y="53" width="67" height="2.500" fill="#f1f2f3"/><rect x="18" y="59" width="67" height="2.500" fill="#f1f2f3"/><rect x="18" y="65" width="67" height="2.500" fill="#f1f2f3"/><rect x="18" y="46" width="66" height="2.600" fill="#3f7be0"/><g fill="none" stroke-width=".9"><path d="M22 32h18M50 32h5M58 32h5M66 32h5M74 32h5" stroke="#a4a6a9"/><path d="M8 36h6M8 40h7M8 44h6M8 48h7M8 52h6M8 58h7M8 62h6" stroke="#a9b4c4"/><path d="M20 41h5M20 44h5M20 51h5M20 54h5M50 41h8M50 44h7M50 51h8M74 41h6M74 44h6M74 51h6" stroke="#9fb0c4"/></g><circle cx="8" cy="31.500" r="1" fill="#ec6a5e"/><use href="#finder" x="58" y="63.500" width="26" height="26"/></svg>
  <svg viewBox="0 0 90 108"><rect x="5" y="25.500" width="80" height="50.500" fill="#fdfdfd"/><rect x="5" y="25.500" width="80" height="2.500" fill="#3f3f42"/><rect x="5" y="28" width="80" height="6.500" fill="#eeeeef"/><path d="M7 31h10M20 31h8M31 31h5M38 31h6" stroke="#4f555e" stroke-width="1.600" stroke-dasharray="3 1"/><path d="M12.500 41 16 37.500 19.500 41V46H12.500Z" fill="none" stroke="#333" stroke-width="1.200"/><text x="20.500" y="44.500" font-family="Open Sans" font-size="5" font-weight="700" fill="#222" textLength="25">Pinky DAY CARE</text><path d="M6 51h11M6 54h7" stroke="#888" stroke-width=".9"/><g fill="none" stroke="#b2b4b8" stroke-width=".7"><path d="M7 57.500H80V72H7ZM7 60H80M7 63H80M7 66H80M7 69H80M17 57.500V72M27 57.500V72M37 57.500V72M47 57.500V72M57 57.500V72M67 57.500V72"/></g><path d="M31 69h30" stroke="#8e9094" stroke-width="2.400"/><use href="#quicktime" x="58.500" y="63.500" width="26" height="26"/></svg>
  <!-- Bin -->
  <svg viewBox="0 0 90 108"><path d="M17 24 22 16 27 19 33 9 40 16 46 12 52 17 56 9.500 62 18 69 16 73 24 62 31H26Z" fill="#ececea"/><path d="M19 22 24 17 28 26ZM44 20 49 14 54 24ZM64 22 69 18 71 25 66 28ZM54 12 58 16 52 20ZM33 13 37 15 33 20Z" fill="#55534f"/><path d="M31 23 36 20 41 25 36 28Z" fill="#5fae8e"/><path d="M39 27 44 25 47 29Z" fill="#3b6fb5"/><path d="M26 27 31 24 33 30ZM50 26 56 22 59 30Z" fill="#6b4a3b"/><path d="M57 20 62 22 60 27Z" fill="#30343c"/><path d="M14.200 22.500Q44.500 36 75.600 22.500L65.500 82.500Q64.500 90 45 90 25.500 90 24.300 82.500Z" fill="url(#gBin)"/><path d="M30 38Q48 52 58 34M22 44Q36 60 50 56M60 48Q52 66 42 80M34 64Q44 72 60 70" fill="none" stroke="#fff" stroke-width="4" opacity=".3"/><path d="M14.200 22.500Q15 18 22 17M75.600 22.500Q75 18.500 68 17" fill="none" stroke="#c9cacc" stroke-width="1.200"/></svg>
</footer>
</body>
</html>
